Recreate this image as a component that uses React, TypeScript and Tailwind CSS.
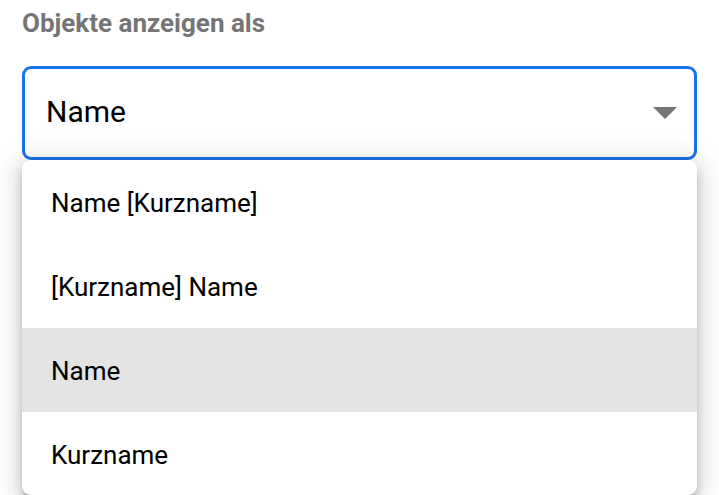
export default function App() {
  const options = ["Name [Kurzname]", "[Kurzname] Name", "Name", "Kurzname"];
  const selected = "Name";
  return (
    <div className="w-[719px] h-[495px] overflow-hidden bg-white px-[22px] font-['Roboto',sans-serif]">
      <div className="pt-[8px] text-[26px] leading-[30px] font-bold text-[#757575]">
        Objekte anzeigen als
      </div>
      <div className="mt-[28px] h-[94px] rounded-[9px] border-[3px] border-[#1a73e8] flex items-center justify-between pl-[21px] pr-[16px]">
        <span className="text-[30px] text-black pb-[4px]">Name</span>
        <svg width="24" height="12" viewBox="0 0 24 12" className="mr-[1px]">
          <path d="M0 0 L24 0 L12 12 Z" fill="#757575" />
        </svg>
      </div>
      <div className="h-[335px] rounded-[9px] bg-white overflow-hidden shadow-[0_5px_5px_-3px_rgba(0,0,0,0.2),0_8px_10px_1px_rgba(0,0,0,0.14),0_3px_24px_6px_rgba(0,0,0,0.14)] flex flex-col">
        {options.map((o) => (
          <div
            key={o}
            className={
              o === selected
                ? "h-[84px] shrink-0 flex items-center pl-[29px] pt-[3px] text-[26px] text-black bg-[#e3e3e3]"
                : "h-[84px] shrink-0 flex items-center pl-[29px] pt-[3px] text-[26px] text-black"
            }
          >
            {o}
          </div>
        ))}
      </div>
    </div>
  );
}
